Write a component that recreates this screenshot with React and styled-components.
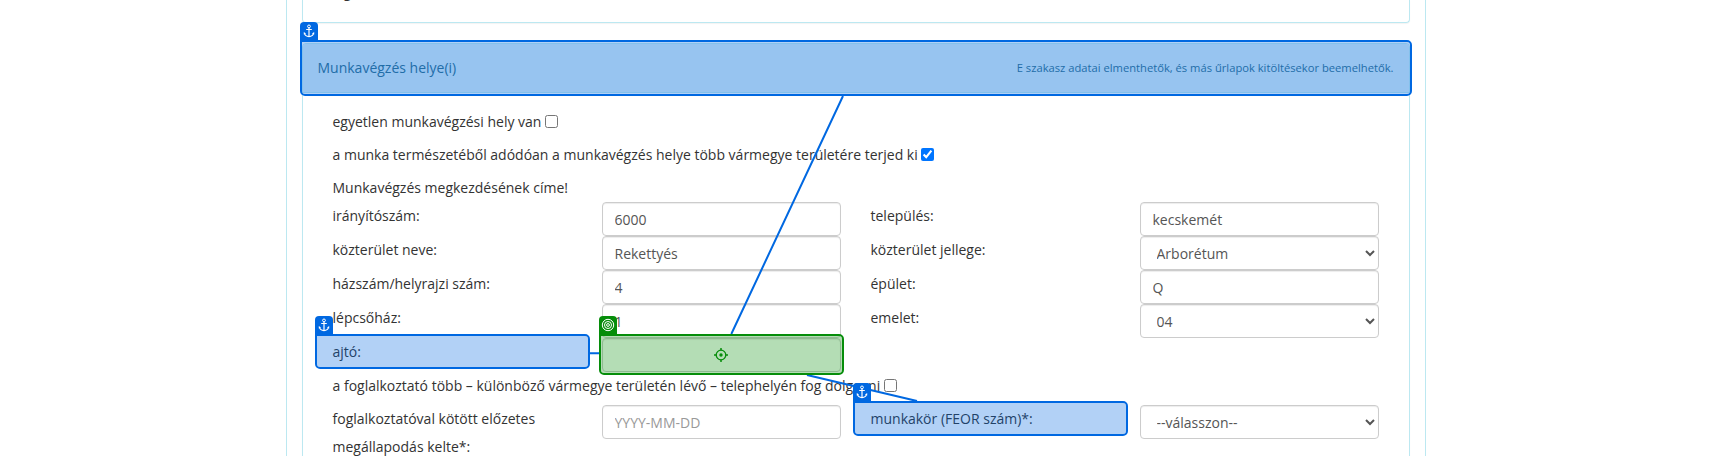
import React from "react";
import styled, { createGlobalStyle, css } from "styled-components";

const BLUE = "0, 104, 225";
const GREEN = "6, 141, 10";

const GlobalStyle = createGlobalStyle`
  * { box-sizing: border-box; }
  body {
    margin: 0;
    background: #fff;
    color: #333;
    font: 14px/28px "Open Sans", "Noto Sans", sans-serif;
    overflow: hidden;
  }
`;

const Page = styled.div`
  position: relative;
  height: 456px;
  overflow: hidden;
`;

const FormFrame = styled.main`
  width: 1140px;
  height: 456px;
  margin-left: 285.5px;
  padding: 0 15px;
  border: solid #bce8f1;
  border-width: 0 1px;
`;

const Section = styled.section`
  border: 1px solid #bce8f1;
  border-radius: 4px;
  box-shadow: 0 1px 1px rgba(0, 0, 0, 0.05);
`;

const PreviousSection = styled(Section)`
  height: 23px;
  margin-bottom: 20px;
  padding-left: 41px;
  border-top: 0;
  border-radius: 0 0 4px 4px;
  overflow: hidden;
`;

const PreviousText = styled.div`
  margin-top: -22px;
`;

const WorkplaceSection = styled(Section)`
  height: 440px;
`;

const SectionHeader = styled.header`
  display: flex;
  align-items: center;
  justify-content: space-between;
  height: 49px;
  padding: 0 15px;
  color: #31708f;
  background: #d9edf7;
  border-bottom: 1px solid #bce8f1;
  border-radius: 3px 3px 0 0;
`;

const HeaderNote = styled.span`
  font-size: 11.2px;
`;

const SectionBody = styled.div`
  padding: 15px 30px 0;
`;

const TextLine = styled.div`
  display: flex;
  align-items: center;
  height: 28px;
  margin-bottom: ${({ $gap = 5 }) => $gap}px;
  white-space: nowrap;
`;

const CheckBox = styled.input.attrs({ type: "checkbox" })`
  width: 13px;
  height: 13px;
  margin: 0 0 2px 3.5px;
`;

const FieldRow = styled.div`
  display: grid;
  grid-template-columns: 239px 239px 239px 239px;
  column-gap: 30px;
  height: 34px;
`;

const control = css`
  display: block;
  width: 239px;
  height: 34px;
  margin: 0;
  padding: 6px 12px;
  font: 14px/20px "Open Sans", "Noto Sans", sans-serif;
  color: #555;
  background-color: #fff;
  border: 1px solid #ccc;
  border-radius: 4px;
  box-shadow: inset 0 1px 1px rgba(0, 0, 0, 0.075);
`;

const TextInput = styled.input`
  ${control}
  &::placeholder { color: #999; opacity: 1; }
`;

const Select = styled.select`
  ${control}
`;

const Annotations = styled.div`
  position: absolute;
  inset: 0;
  pointer-events: none;
`;

const Connectors = styled.svg`
  position: absolute;
  inset: 0;
`;

const Highlight = styled.div`
  position: absolute;
  left: ${({ $x }) => $x}px;
  top: ${({ $y }) => $y}px;
  width: ${({ $w }) => $w}px;
  height: ${({ $h }) => $h}px;
  display: flex;
  align-items: center;
  justify-content: center;
  color: rgb(${({ $tone }) => $tone});
  background: rgba(${({ $tone }) => $tone}, 0.3);
  background-clip: padding-box;
  border: 2px solid rgb(${({ $tone }) => $tone});
  border-radius: 0 5px 5px 5px;
`;

const Tab = styled.span`
  position: absolute;
  left: -2px;
  top: -20px;
  width: 18px;
  height: 18px;
  display: grid;
  place-items: center;
  background: rgb(${({ $tone }) => $tone});
  border-radius: 4px 4px 0 0;
  color: #fff;
`;

const Crosshair = styled.svg`
  margin: 1px 1px 0 0;
`;

const AnchorIcon = () => (
  <svg width="18" height="18" viewBox="0 0 18 18" fill="none" stroke="currentColor">
    <circle cx="9" cy="4.4" r="1.4" strokeWidth="1" />
    <path d="M9 5.9v9M6.2 7.5h5.6" strokeWidth="1.2" />
    <path d="M4.4 11.2c.5 2.3 2.2 3.4 4.6 3.4s4.1-1.1 4.6-3.4" strokeWidth="1.1" />
    <path d="M3.8 12.6V10l2.2 1.6zM14.2 12.6V10L12 11.6z" fill="currentColor" stroke="none" />
  </svg>
);

const RingsIcon = () => (
  <svg width="18" height="18" viewBox="0 0 18 18" fill="none" stroke="currentColor">
    <circle cx="9" cy="9" r="5.7" />
    <circle cx="9" cy="9" r="3.5" />
    <circle cx="9" cy="9" r="1.4" />
  </svg>
);

const CrosshairIcon = () => (
  <Crosshair width="14" height="14" viewBox="0 0 14 14" fill="none" stroke="currentColor">
    <circle cx="7" cy="7" r="4.8" strokeWidth="1.3" />
    <circle cx="7" cy="7" r="1.7" fill="currentColor" stroke="none" />
    <path d="M7 0v2.5M7 11.5V14M0 7h2.5M11.5 7H14" strokeWidth="1.5" />
  </Crosshair>
);

const Field = ({ label, value, options, placeholder }) => (
  <>
    <label>{label}</label>
    {options ? (
      <Select defaultValue={options[0]}>
        {options.map((o) => <option key={o}>{o}</option>)}
      </Select>
    ) : (
      <TextInput defaultValue={value} placeholder={placeholder} />
    )}
  </>
);

const AnchorHighlight = (props) => (
  <Highlight $tone={BLUE} {...props}>
    <Tab $tone={BLUE}><AnchorIcon /></Tab>
  </Highlight>
);

export default function App() {
  return (
    <Page>
      <GlobalStyle />
      <FormFrame>
        <PreviousSection><PreviousText>g</PreviousText></PreviousSection>
        <WorkplaceSection>
          <SectionHeader>
            <span>Munkavégzés helye(i)</span>
            <HeaderNote>E szakasz adatai elmenthetők, és más űrlapok kitöltésekor beemelhetők.</HeaderNote>
          </SectionHeader>
          <SectionBody>
            <TextLine>egyetlen munkavégzési hely van<CheckBox /></TextLine>
            <TextLine>
              a munka természetéből adódóan a munkavégzés helye több vármegye területére terjed ki
              <CheckBox defaultChecked />
            </TextLine>
            <TextLine $gap={0}>Munkavégzés megkezdésének címe!</TextLine>
            <FieldRow>
              <Field label="irányítószám:" value="6000" />
              <Field label="település:" value="kecskemét" />
            </FieldRow>
            <FieldRow>
              <Field label="közterület neve:" value="Rekettyés" />
              <Field label="közterület jellege:" options={["Arborétum"]} />
            </FieldRow>
            <FieldRow>
              <Field label="házszám/helyrajzi szám:" value="4" />
              <Field label="épület:" value="Q" />
            </FieldRow>
            <FieldRow>
              <Field label="lépcsőház:" value="1" />
              <Field label="emelet:" options={["04"]} />
            </FieldRow>
            <FieldRow>
              <Field label="ajtó:" value="" />
            </FieldRow>
            <TextLine>
              a foglalkoztató több – különböző vármegye területén lévő – telephelyén fog dolgozni
              <CheckBox />
            </TextLine>
            <FieldRow>
              <Field label="foglalkoztatóval kötött előzetes megállapodás kelte*:" placeholder="YYYY-MM-DD" />
              <Field label="munkakör (FEOR szám)*:" options={["--válasszon--"]} />
            </FieldRow>
          </SectionBody>
        </WorkplaceSection>
      </FormFrame>
      <Annotations>
        <Connectors width="1712" height="456" stroke={`rgb(${BLUE})`} strokeWidth="2">
          <path d="M843 96L731.3 334M590 353.2L599 353.3M807 375L917 401" />
        </Connectors>
        <AnchorHighlight $x={300} $y={40} $w={1112} $h={56} />
        <AnchorHighlight $x={315} $y={334} $w={275} $h={35} />
        <Highlight $tone={GREEN} $x={599} $y={334} $w={245} $h={41}>
          <Tab $tone={GREEN}><RingsIcon /></Tab>
          <CrosshairIcon />
        </Highlight>
        <AnchorHighlight $x={853} $y={401} $w={275} $h={35} />
      </Annotations>
    </Page>
  );
}
